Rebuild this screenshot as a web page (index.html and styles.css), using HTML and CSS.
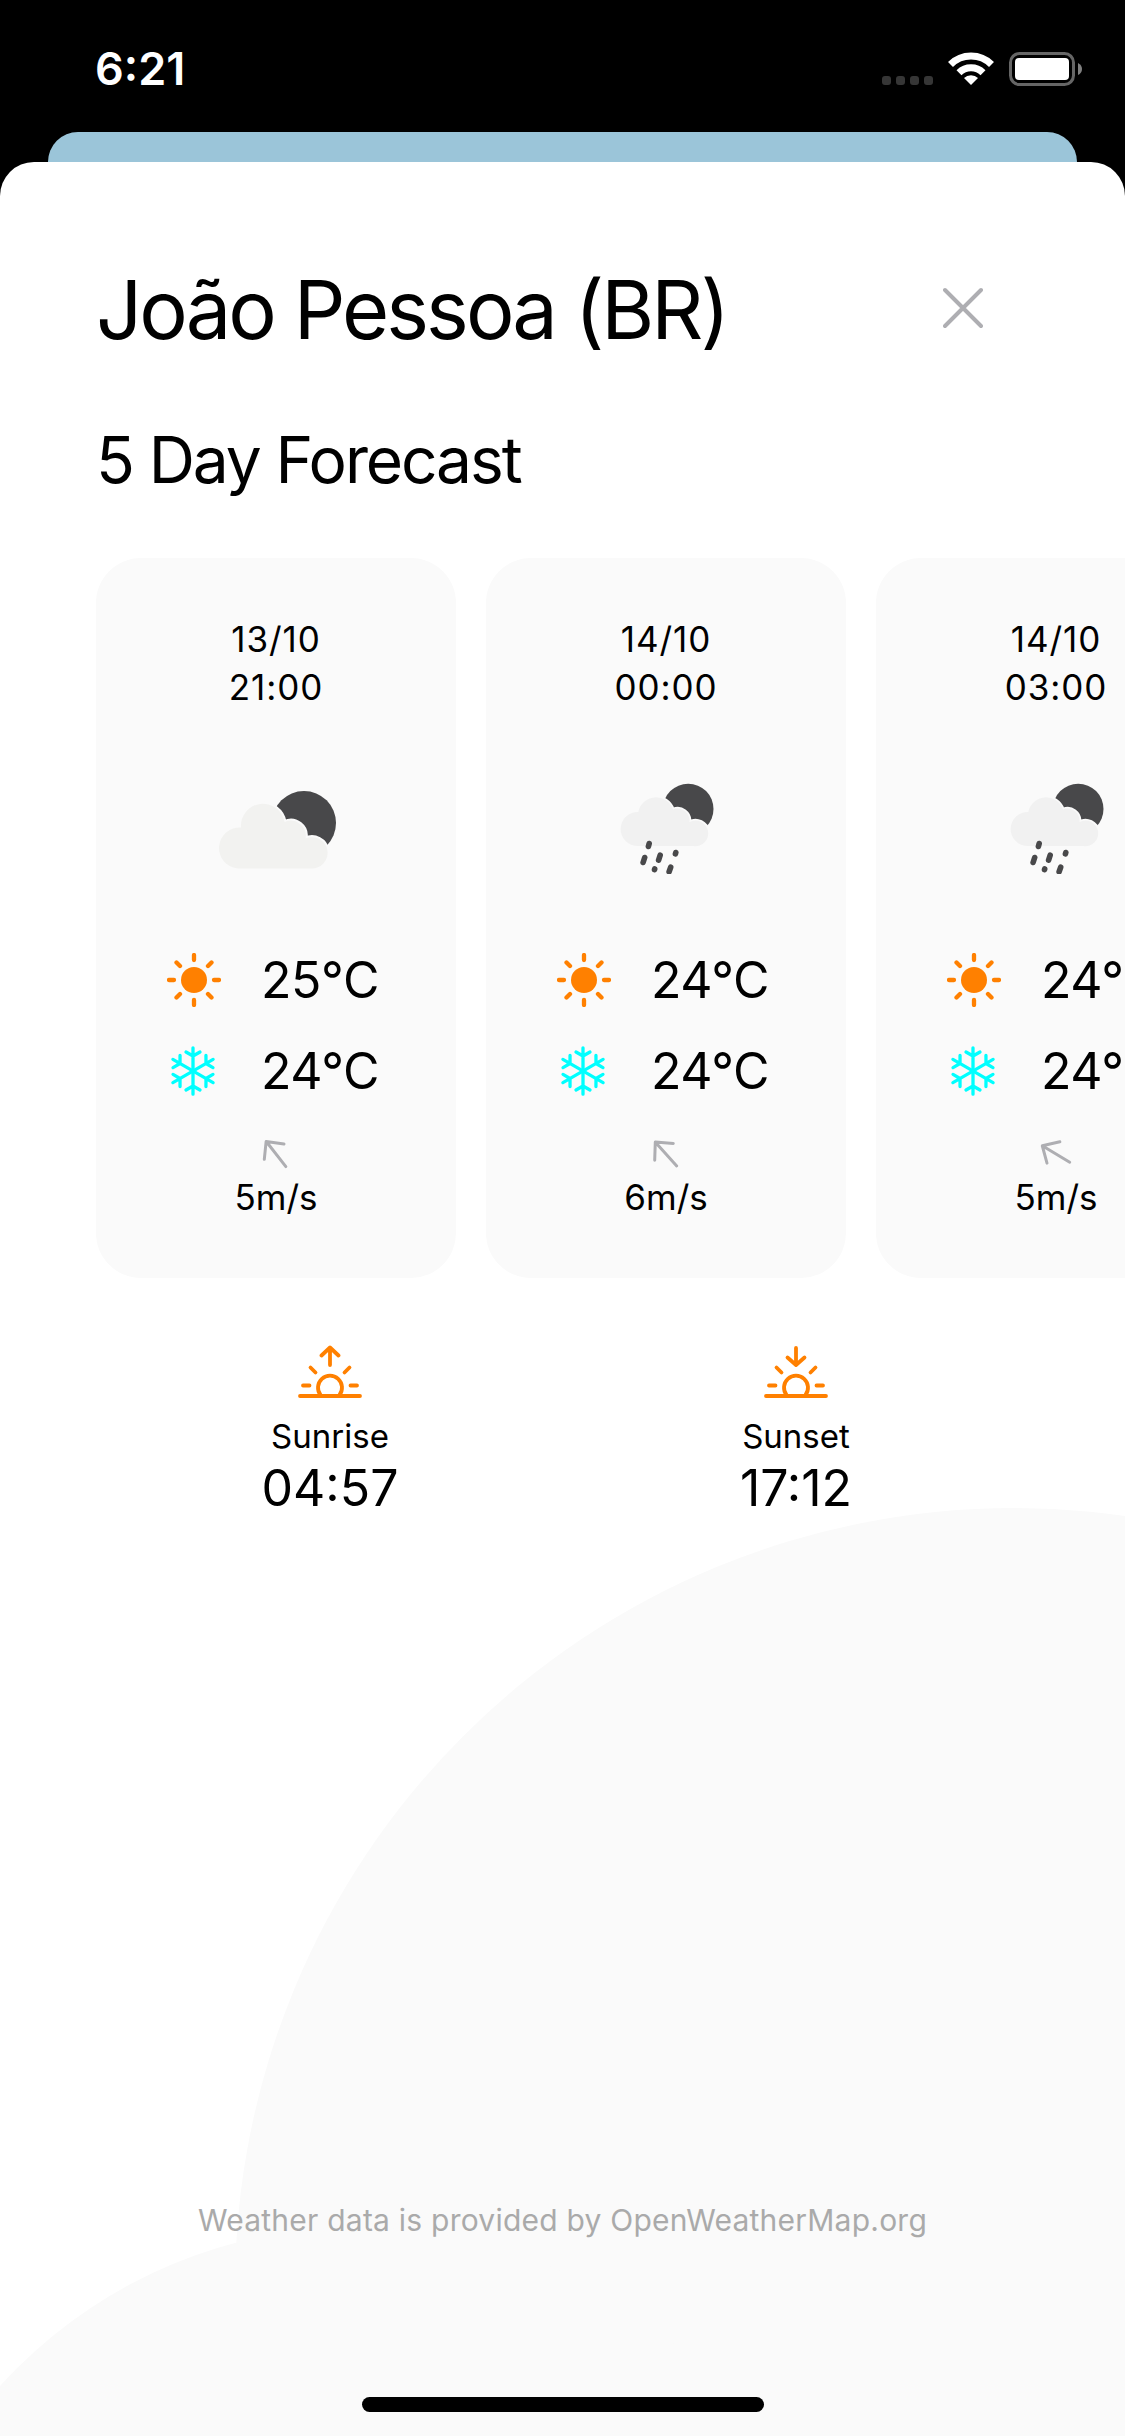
FILE: index.html
```html
<!DOCTYPE html>
<html lang="en">
<head>
<meta charset="utf-8">
<title>Forecast</title>
<link rel="stylesheet" href="styles.css">
</head>
<body>
<svg class="defs" aria-hidden="true">
  <symbol id="cloud-moon" viewBox="0 0 117 78">
    <circle cx="85" cy="32" r="32" fill="#48484a"/>
    <path d="M19 77.500A20.500 20.500 0 0 1 22 36.600A22 22 0 0 1 65.600 31A15 15 0 0 1 86.500 47.500A15.700 15.700 0 1 1 92 77.500Z" fill="#f2f2f0" stroke="#fafafa" stroke-width="4" paint-order="stroke"/>
  </symbol>
  <symbol id="rain-moon" viewBox="0 0 94 91">
    <circle cx="68.200" cy="26" r="25.300" fill="#48484a"/>
    <path d="M17 63A17 17 0 0 1 18.300 29A18 18 0 0 1 53 26.500A12 12 0 0 1 69.500 39A12.800 12.800 0 1 1 73.500 63Z" fill="#f1f1f1" stroke="#fafafa" stroke-width="3.500" paint-order="stroke"/>
    <path d="M29.200 60.500l-.800 3M24.700 74.500l-1.600 5M40.200 72.200l-1.600 5M55.800 69.500l-.400 1.400M34.700 86l-.200.600M50.700 84.200l-1.600 4.500" stroke="#48484a" stroke-width="5.600" stroke-linecap="round"/>
  </symbol>
  <symbol id="sun" viewBox="-27 -27 54 54">
    <circle r="13" fill="#ff8000"/>
    <path d="M0-25V-20M0 20V25M-25 0H-20M20 0H25M-17.500-17.500L-14-14M17.500-17.500L14-14M-17.500 17.500L-14 14M17.500 17.500L14 14" stroke="#ff8000" stroke-width="4.300" stroke-linecap="round"/>
  </symbol>
  <symbol id="snow" viewBox="-25 -25 50 50">
    <g fill="none" stroke="#00ffff" stroke-width="3.300" stroke-linecap="round" stroke-linejoin="round">
      <path d="M0-23.200V23.200M-7-19L0-15L7-19M-7 19L0 15L7 19"/>
      <path d="M0-23.200V23.200M-7-19L0-15L7-19M-7 19L0 15L7 19" transform="rotate(60)"/>
      <path d="M0-23.200V23.200M-7-19L0-15L7-19M-7 19L0 15L7 19" transform="rotate(120)"/>
    </g>
  </symbol>
  <symbol id="wind" viewBox="-18 -18 36 36">
    <path d="M0 16V-15.500M-12.500-3L0-16L12.500-3" fill="none" stroke="#aeaeb2" stroke-width="3" stroke-linecap="round" stroke-linejoin="round"/>
  </symbol>
  <symbol id="horizon" viewBox="0 0 64 54">
    <path d="M2 51H62M5 40.500H11.500M52.500 40.500H59M12.500 22.500L17.500 27.500M51.500 22.500L46.500 27.500M22.500 50A12 12 0 1 1 41.500 50" fill="none" stroke="#ff8000" stroke-width="3.800" stroke-linecap="round"/>
  </symbol>
</svg>
<div class="phone">
  <header class="status">
    <span class="clock">6:21</span>
    <div class="indicators">
      <svg class="signal" width="52" height="10" viewBox="0 0 52 10" fill="#363636"><rect width="9" height="9" rx="3"/><rect x="14" width="9" height="9" rx="3"/><rect x="28" width="9" height="9" rx="3"/><rect x="42" width="9" height="9" rx="3"/></svg>
      <svg class="wifi" width="46" height="33" viewBox="0 0 46 33"><g fill="none" stroke="#fff" stroke-width="7"><path d="M2.500 12.500A29 29 0 0 1 43.500 12.500"/><path d="M11 20.700A17 17 0 0 1 35 20.700"/></g><path d="M23 33L16 26A10 10 0 0 1 30 26Z" fill="#fff"/></svg>
      <svg class="battery" width="73" height="34" viewBox="0 0 73 34"><rect x="1.500" y="1.500" width="63" height="31" rx="9" fill="none" stroke="#666" stroke-width="3"/><rect x="6" y="6" width="54" height="22" rx="4" fill="#fff"/><path d="M69 11Q73 13 73 17T69 23Z" fill="#808080"/></svg>
    </div>
  </header>
  <div class="back-card"></div>
  <main class="sheet">
    <div class="circle circle-large"></div>
    <div class="circle circle-small"></div>
    <div class="title-row">
      <h1>João Pessoa (BR)</h1>
      <svg class="close" width="40" height="42" viewBox="0 0 40 42"><path d="M2 3L38 39M38 3L2 39" stroke="#aeaeb2" stroke-width="4" stroke-linecap="round"/></svg>
    </div>
    <h2>5 Day Forecast</h2>
    <section class="cards">
      <article class="card">
        <div class="when"><span>13/10</span><span>21:00</span></div>
        <div class="sky"><svg class="partly"><use href="#cloud-moon"/></svg></div>
        <div class="temp"><svg class="sun"><use href="#sun"/></svg><span>25°C</span></div>
        <div class="temp"><svg class="snow"><use href="#snow"/></svg><span>24°C</span></div>
        <svg class="wind" style="transform:rotate(-38deg)"><use href="#wind"/></svg>
        <span class="speed">5m/s</span>
      </article>
      <article class="card">
        <div class="when"><span>14/10</span><span>00:00</span></div>
        <div class="sky"><svg class="rain"><use href="#rain-moon"/></svg></div>
        <div class="temp"><svg class="sun"><use href="#sun"/></svg><span>24°C</span></div>
        <div class="temp"><svg class="snow"><use href="#snow"/></svg><span>24°C</span></div>
        <svg class="wind" style="transform:rotate(-42deg)"><use href="#wind"/></svg>
        <span class="speed">6m/s</span>
      </article>
      <article class="card">
        <div class="when"><span>14/10</span><span>03:00</span></div>
        <div class="sky"><svg class="rain"><use href="#rain-moon"/></svg></div>
        <div class="temp"><svg class="sun"><use href="#sun"/></svg><span>24°C</span></div>
        <div class="temp"><svg class="snow"><use href="#snow"/></svg><span>24°C</span></div>
        <svg class="wind" style="transform:rotate(-59deg)"><use href="#wind"/></svg>
        <span class="speed">5m/s</span>
      </article>
    </section>
    <section class="sun-times">
      <div class="event">
        <svg width="64" height="54" viewBox="0 0 64 54"><use href="#horizon"/><path d="M32 20V3M23.500 10.500L32 2.500L40.500 10.500" fill="none" stroke="#ff8000" stroke-width="3.800" stroke-linecap="round" stroke-linejoin="round"/></svg>
        <span class="label">Sunrise</span><span class="time">04:57</span>
      </div>
      <div class="event">
        <svg width="64" height="54" viewBox="0 0 64 54"><use href="#horizon"/><path d="M32 3V19M23.500 12.500L32 20L40.500 12.500" fill="none" stroke="#ff8000" stroke-width="3.800" stroke-linecap="round" stroke-linejoin="round"/></svg>
        <span class="label">Sunset</span><span class="time">17:12</span>
      </div>
    </section>
    <footer><p>Weather data is provided by OpenWeatherMap.org</p><div class="home-bar"></div></footer>
  </main>
</div>
</body>
</html>
```
FILE: styles.css
```css
* { box-sizing: border-box; }
body { margin: 0; background: #000; color: #000; font-family: Inter, "Liberation Sans", sans-serif; }
h1, h2, p { margin: 0; font-weight: 400; white-space: nowrap; }
svg { display: block; flex: none; }
.defs { position: absolute; width: 0; height: 0; }
.phone { width: 1125px; height: 2436px; overflow: hidden; display: flex; flex-direction: column; }
.status { height: 132px; flex: none; display: flex; justify-content: space-between; padding: 42px 43px 0 95px; color: #fff; }
.clock { font-size: 45px; line-height: 54px; font-weight: 600; }
.indicators { display: flex; padding-top: 10px; }
.signal { margin-top: 24px; }
.wifi { margin-left: 14px; }
.battery { margin-left: 15px; }
.back-card { height: 30px; flex: none; margin: 0 48px; background: #9bc5d9; border-radius: 30px 30px 0 0; }
.sheet { position: relative; flex: 1; display: flex; flex-direction: column; overflow: hidden; background: #fff; border-radius: 34px 34px 0 0; }
.sheet > * { position: relative; }
.sheet > .circle { position: absolute; border-radius: 50%; background: #fafafa; }
.circle-large { width: 1558px; height: 1558px; left: 235px; top: 1346px; }
.circle-small { width: 967px; height: 967px; left: -125px; top: 2065px; }
.title-row { display: flex; justify-content: space-between; align-items: flex-start; height: 100px; margin: 98px 142px 0 96px; }
h1 { font-size: 81px; line-height: 100px; letter-spacing: -2.950px; }
.close { margin-top: 27px; }
h2 { margin: 60px 0 0 96px; height: 77px; font-size: 64px; line-height: 79px; letter-spacing: -2.100px; }
.cards { display: flex; gap: 30px; margin: 61px 0 0 96px; }
.card { flex: none; width: 360px; height: 720px; border-radius: 45px; background: #fafafa; display: flex; flex-direction: column; align-items: center; padding-top: 57px; }
.when { display: flex; flex-direction: column; align-items: center; font-size: 35px; line-height: 48px; letter-spacing: .900px; }
.sky { height: 223px; width: 100%; display: flex; justify-content: center; padding-top: 72px; }
.partly { width: 117px; height: 78px; margin: 8px 0 0 3px; }
.rain { width: 94px; height: 91px; margin-left: 1px; }
.temp { display: flex; align-items: center; height: 91px; width: 100%; padding-left: 71px; font-size: 50px; letter-spacing: -.400px; }
.sun { width: 54px; height: 54px; }
.snow { width: 50px; height: 50px; margin: 0 3px 0 1px; }
.temp span { margin-left: 40px; }
.wind { width: 36px; height: 36px; margin-top: 20px; }
.speed { margin-top: 1px; font-size: 35px; line-height: 48px; }
.sun-times { display: flex; margin: 67px 95px 0 97px; }
.event { width: 466px; display: flex; flex-direction: column; align-items: center; }
.label { margin-top: 16px; font-size: 33px; line-height: 42px; }
.time { margin-top: 1px; font-size: 50px; line-height: 60px; }
footer { margin-top: auto; display: flex; flex-direction: column; align-items: center; }
footer p { font-size: 30px; line-height: 38px; color: #aaa; letter-spacing: .230px; }
.home-bar { width: 402px; height: 15px; border-radius: 8px; background: #000; margin: 158px 0 24px; }
```
